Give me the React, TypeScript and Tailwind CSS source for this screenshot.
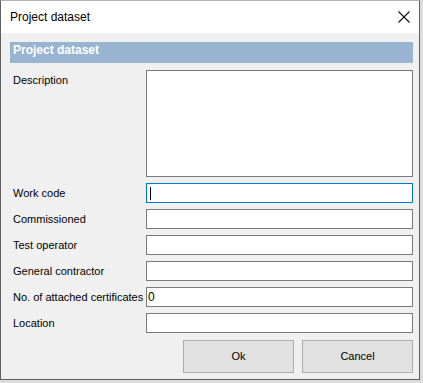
import React from "react";

const font = { fontFamily: '"Liberation Sans", Arial, sans-serif' };

function Field({ label, value, focused }: { label: string; value?: string; focused?: boolean }) {
  return (
    <div className="flex h-[20px] items-center">
      <div className="w-[133px] text-[11px] leading-none text-black whitespace-nowrap">{label}</div>
      <div
        className={`flex h-[20px] w-[267px] items-center bg-white border ${
          focused ? "border-[#0078d7]" : "border-[#7a7a7a]"
        } pl-[1px] text-[12px] leading-none text-black`}
      >
        {focused ? <div className="ml-[2px] h-[13px] w-[1px] bg-black" /> : value}
      </div>
    </div>
  );
}

export default function App() {
  return (
    <div className="w-[423px] h-[383px] bg-[#dcdcdc]" style={font}>
      <div className="flex h-[380px] w-[420px] flex-col border-x border-b border-[#5f5f5f] border-t border-t-[#b4b4b4] bg-white">
        <div className="flex h-[32px] shrink-0 items-center justify-between bg-white pl-[9px] pr-[8px]">
          <span className="text-[12px] text-black">Project dataset</span>
          <svg width="12" height="12" viewBox="0 0 12 12" className="mr-[1px]">
            <path d="M0.5 0.5 L11.5 11.5 M11.5 0.5 L0.5 11.5" stroke="#111" strokeWidth="1.1" />
          </svg>
        </div>
        <div className="flex flex-1 flex-col bg-[#f0f0f0] pl-[9px] pr-[5px] pt-[9px]">
          <div className="h-[21px] w-[403px] bg-[#99b4d1] pl-[3px] pt-[1px] text-[12px] font-bold leading-[15px] text-white">
            Project dataset
          </div>
          <div className="mt-[7px] flex flex-col gap-[6px] pl-[3px]">
            <div className="flex h-[107px]">
              <div className="w-[133px] pt-[5px] text-[11px] leading-none text-black">Description</div>
              <div className="h-[107px] w-[267px] border border-[#7a7a7a] bg-white" />
            </div>
            <Field label="Work code" focused />
            <Field label="Commissioned" />
            <Field label="Test operator" />
            <Field label="General contractor" />
            <Field label="No. of attached certificates" value="0" />
            <Field label="Location" />
          </div>
          <div className="mt-[7px] flex justify-end gap-[8px] pr-[1px]">
            <button className="h-[33px] w-[111px] border border-[#adadad] bg-[#e1e1e1] text-[11px] text-black">
              Ok
            </button>
            <button className="h-[33px] w-[111px] border border-[#adadad] bg-[#e1e1e1] text-[11px] text-black">
              Cancel
            </button>
          </div>
        </div>
      </div>
    </div>
  );
}
